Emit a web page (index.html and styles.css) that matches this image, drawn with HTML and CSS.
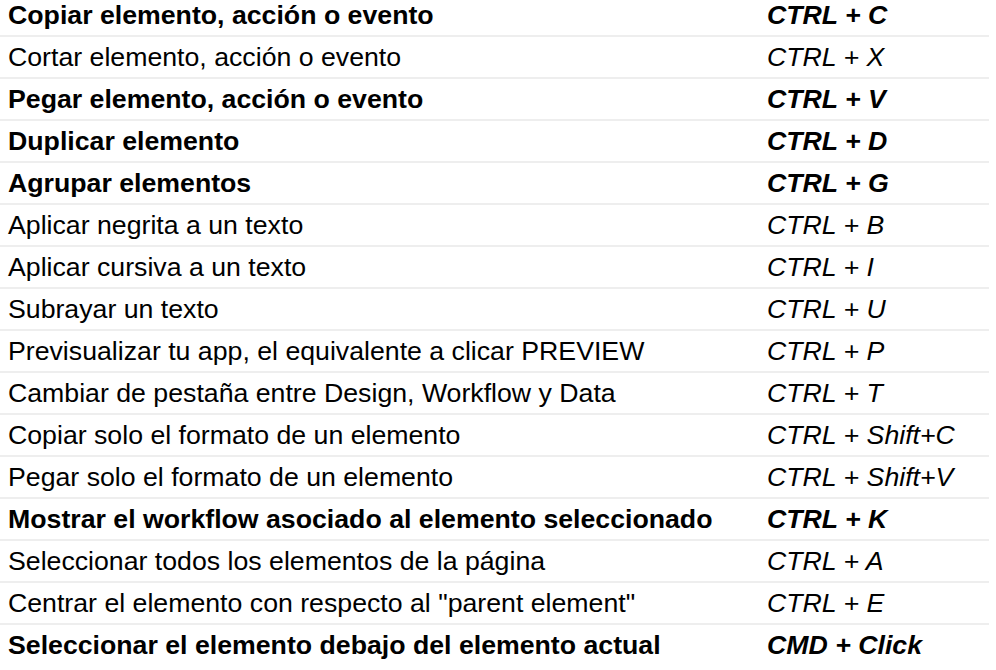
FILE: index.html
```html
<!DOCTYPE html>
<html lang="es">
<head>
<meta charset="utf-8">
<title>Atajos</title>
<link rel="stylesheet" href="styles.css">
</head>
<body>
<div class="shortcuts">
  <div class="row b"><span class="act">Copiar elemento, acción o evento</span><span class="key">CTRL + C</span></div>
  <div class="row"><span class="act">Cortar elemento, acción o evento</span><span class="key">CTRL + X</span></div>
  <div class="row b"><span class="act">Pegar elemento, acción o evento</span><span class="key">CTRL + V</span></div>
  <div class="row b"><span class="act">Duplicar elemento</span><span class="key">CTRL + D</span></div>
  <div class="row b"><span class="act">Agrupar elementos</span><span class="key">CTRL + G</span></div>
  <div class="row"><span class="act">Aplicar negrita a un texto</span><span class="key">CTRL + B</span></div>
  <div class="row"><span class="act">Aplicar cursiva a un texto</span><span class="key">CTRL + I</span></div>
  <div class="row"><span class="act">Subrayar un texto</span><span class="key">CTRL + U</span></div>
  <div class="row"><span class="act">Previsualizar tu app, el equivalente a clicar PREVIEW</span><span class="key">CTRL + P</span></div>
  <div class="row"><span class="act">Cambiar de pestaña entre Design, Workflow y Data</span><span class="key">CTRL + T</span></div>
  <div class="row"><span class="act">Copiar solo el formato de un elemento</span><span class="key">CTRL + Shift+C</span></div>
  <div class="row"><span class="act">Pegar solo el formato de un elemento</span><span class="key">CTRL + Shift+V</span></div>
  <div class="row b"><span class="act">Mostrar el workflow asociado al elemento seleccionado</span><span class="key">CTRL + K</span></div>
  <div class="row"><span class="act">Seleccionar todos los elementos de la página</span><span class="key">CTRL + A</span></div>
  <div class="row"><span class="act">Centrar el elemento con respecto al "parent element"</span><span class="key">CTRL + E</span></div>
  <div class="row b last"><span class="act">Seleccionar el elemento debajo del elemento actual</span><span class="key">CMD + Click</span></div>
</div>
</body>
</html>
```
FILE: styles.css
```css
html, body {
  margin: 0;
  padding: 0;
  background: #ffffff;
}
body {
  font-family: "Liberation Sans", Arial, sans-serif;
  font-size: 26.7px;
  color: #000;
  overflow: hidden;
}
.shortcuts {
  width: 989px;
  margin-top: -5px;
  display: flex;
  flex-direction: column;
}
.row {
  display: grid;
  grid-template-columns: 767px 1fr;
  height: 40px;
  line-height: 40px;
  align-items: center;
  border-bottom: 2px solid #eeeeee;
  white-space: nowrap;
}
.row.last {
  border-bottom: none;
}
.act {
  padding-left: 8px;
}
.key {
  font-style: italic;
}
.b {
  font-weight: bold;
}
```
